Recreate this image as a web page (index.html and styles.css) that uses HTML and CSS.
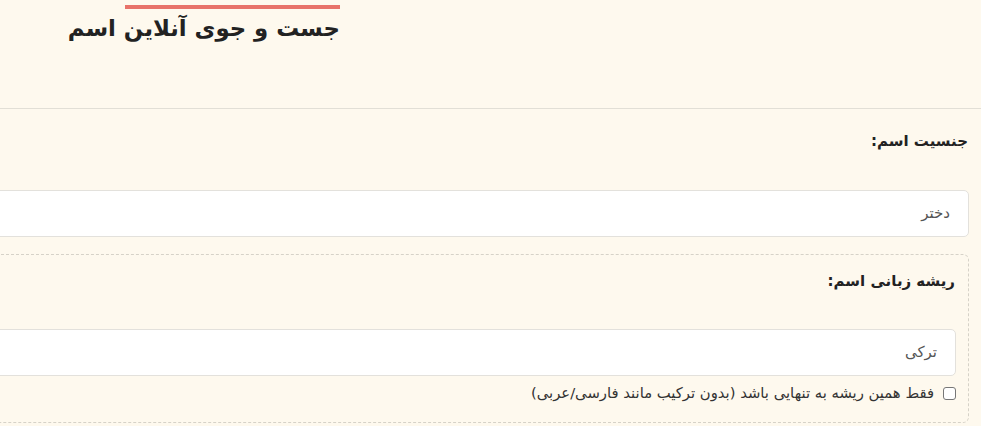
FILE: index.html
```html
<!DOCTYPE html>
<html lang="fa" dir="rtl">
<head>
<meta charset="utf-8">
<title>جست و جوی آنلاین اسم</title>
<link rel="stylesheet" href="styles.css">
</head>
<body>
<div class="page">
  <header class="header">
    <h1 class="title">جست و جوی آنلاین اسم</h1>
  </header>
  <main class="form">
    <div class="field">
      <label class="label">جنسیت اسم:</label>
      <div class="input">دختر</div>
    </div>
    <fieldset class="group">
      <label class="label">ریشه زبانی اسم:</label>
      <div class="input">ترکی</div>
      <label class="check">
        <span class="box"></span>
        <span>فقط همین ریشه به تنهایی باشد (بدون ترکیب مانند فارسی/عربی)</span>
      </label>
    </fieldset>
  </main>
</div>
</body>
</html>
```

FILE: styles.css
```css
html, body {
  margin: 0;
  padding: 0;
  background: #fef9ee;
}
body {
  font-family: "DejaVu Sans", "Noto Sans", sans-serif;
  color: #222;
  width: 981px;
  height: 426px;
  overflow: hidden;
}
.page {
  overflow: hidden;
  height: 426px;
}
.header {
  height: 108px;
  border-bottom: 1px solid #e2dfd6;
  padding-right: 641px;
  display: flex;
  justify-content: flex-start;
}
.title {
  margin: 0;
  position: relative;
  padding-top: 12px;
  font-size: 22.8px;
  font-weight: bold;
  line-height: 32px;
  color: #222;
  white-space: nowrap;
}
.title::before {
  content: "";
  position: absolute;
  top: 5px;
  right: 0;
  width: 215px;
  height: 4px;
  background: #e8736a;
}
.form {
  margin-left: -40px;
  padding-right: 12px;
  padding-top: 20px;
}
.field {
  display: flex;
  flex-direction: column;
}
.label {
  font-size: 15px;
  font-weight: bold;
  line-height: 24px;
  padding-right: 1px;
  margin-bottom: 37px;
}
.input {
  height: 45px;
  border: 1px solid #e3e1dc;
  border-radius: 5px;
  background: #fff;
  font-size: 15px;
  color: #555;
  line-height: 45px;
  padding-right: 18px;
}
.group {
  margin: 17px 0 0 0;
  padding: 14px 12px 20px 0;
  border: 1px dashed #d6d2c8;
  border-radius: 6px;
  display: flex;
  flex-direction: column;
  min-width: 0;
}
.group .label {
  margin-bottom: 36px;
}
.check {
  display: flex;
  align-items: center;
  gap: 9px;
  font-size: 14.8px;
  color: #333;
  margin-top: 8px;
  line-height: 18px;
}
.box {
  width: 11px;
  height: 11px;
  border: 1px solid #777;
  border-radius: 3px;
  background: #fff;
  flex: none;
}
```
